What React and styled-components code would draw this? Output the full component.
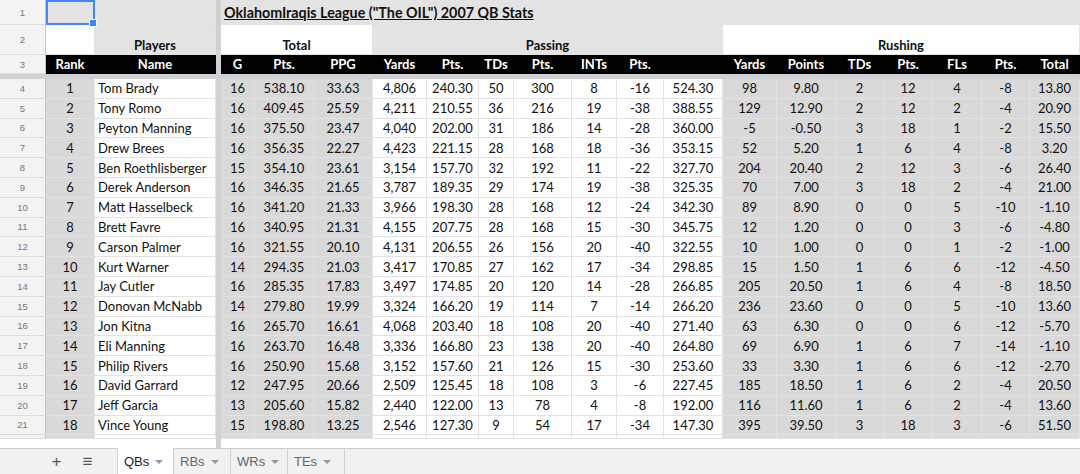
import React from 'react';
import styled, { createGlobalStyle, css } from 'styled-components';

const GlobalStyle = createGlobalStyle`
  html, body {
    margin: 0;
    padding: 0;
    background: #fff;
  }
  body {
    font-family: Lato, "Open Sans", sans-serif;
  }
`;

// column widths of the sheet, row header first, then A, B, frozen bar, C..S
const COLS = [46, 49, 121, 5, 34, 59, 59, 54, 52, 35, 58, 45, 47, 59, 54, 59, 48, 49, 49, 48, 50];

const FILLS = {
  gray: '#d9d9d9',
  light: '#e3e3e3',
  white: '#ffffff',
  black: '#000000',
};

const Page = styled.div`
  display: flex;
  flex-direction: column;
  width: 1080px;
  height: 474px;
  overflow: hidden;
`;

const Sheet = styled.div`
  flex: 1;
  display: grid;
  grid-template-columns: ${COLS.map(c => `${c}px`).join(' ')};
  grid-template-rows: 25px 30px 19px 5px repeat(18, 19.8px) 4px 1fr;
  background: #fff;
`;

const RowNum = styled.div`
  background: #f3f3f3;
  border-right: 1px solid #c4c4c4;
  border-bottom: 1px solid #dcdcdc;
  box-sizing: border-box;
  color: #777;
  font-family: "Liberation Sans", Arial, sans-serif;
  font-size: 9.5px;
  display: flex;
  align-items: center;
  justify-content: center;
`;

const Cell = styled.div`
  box-sizing: border-box;
  background: ${p => FILLS[p.$fill || 'white']};
  grid-column: span ${p => p.$span || 1};
  border-right: 1px solid ${p => (p.$fill === 'black' ? '#000' : '#e2e2e2')};
  border-bottom: 1px solid ${p => (p.$fill === 'black' ? '#000' : '#e2e2e2')};
  color: ${p => (p.$fill === 'black' ? '#fff' : '#111')};
  font-size: 13px;
  font-weight: ${p => (p.$bold ? 700 : 400)};
  white-space: nowrap;
  overflow: hidden;
  display: flex;
  align-items: ${p => (p.$bottom ? 'flex-end' : 'center')};
  justify-content: ${p => (p.$left ? 'flex-start' : 'center')};
  padding: ${p => (p.$left ? '0 3px' : '0')};
  padding-bottom: ${p => (p.$bottom ? '1px' : '0')};
  ${p => p.$selected && css`
    position: relative;
    overflow: visible;
    border: 2px solid #4285f4;
  `}
`;

const Handle = styled.span`
  position: absolute;
  right: -4px;
  bottom: -4px;
  width: 6px;
  height: 6px;
  background: #4285f4;
  border: 1px solid #fff;
`;

const Title = styled.span`
  font-weight: 700;
  text-decoration: underline;
  font-size: 14.3px;
`;

const FrozenV = styled.div`
  background: #cfd1d4;
`;

const FrozenH = styled.div`
  grid-column: 1 / -1;
  background: #cfd1d4;
`;

const Blank = styled.div`
  grid-column: span ${p => p.$span || 1};
  background: #fff;
`;

const TabBar = styled.div`
  height: 26px;
  flex: none;
  display: flex;
  align-items: stretch;
  background: #f1f1f1;
  border-top: 1px solid #cfcfcf;
  box-sizing: border-box;
  font-family: "Liberation Sans", Arial, sans-serif;
`;

const ToolGroup = styled.div`
  display: flex;
  margin-left: 41px;
`;

const ToolIcon = styled.div`
  width: 31px;
  display: flex;
  align-items: center;
  justify-content: center;
  color: #555;
  font-size: 17px;
`;

const Tabs = styled.div`
  display: flex;
  margin-left: 14px;
`;

const Tab = styled.div`
  width: 57px;
  box-sizing: border-box;
  display: flex;
  align-items: center;
  gap: 6px;
  padding-left: 6px;
  margin-top: -1px;
  border-right: 1px solid #cfcfcf;
  border-left: ${p => (p.$active ? '1px solid #cfcfcf' : 'none')};
  background: ${p => (p.$active ? '#fff' : 'transparent')};
  color: ${p => (p.$active ? '#222' : '#666')};
  font-size: 13px;
`;

const Caret = styled.span`
  width: 0;
  height: 0;
  border-left: 4px solid transparent;
  border-right: 4px solid transparent;
  border-top: 4px solid #999;
  margin-top: 2px;
`;

const HEADERS = ['Rank', 'Name', 'G', 'Pts.', 'PPG', 'Yards', 'Pts.', 'TDs', 'Pts.', 'INTs', 'Pts.', '', 'Yards', 'Points', 'TDs', 'Pts.', 'FLs', 'Pts.', 'Total'];

const DATA = [
  [1, 'Tom Brady', 16, '538.10', '33.63', '4,806', '240.30', 50, 300, 8, -16, '524.30', 98, '9.80', 2, 12, 4, -8, '13.80'],
  [2, 'Tony Romo', 16, '409.45', '25.59', '4,211', '210.55', 36, 216, 19, -38, '388.55', 129, '12.90', 2, 12, 2, -4, '20.90'],
  [3, 'Peyton Manning', 16, '375.50', '23.47', '4,040', '202.00', 31, 186, 14, -28, '360.00', -5, '-0.50', 3, 18, 1, -2, '15.50'],
  [4, 'Drew Brees', 16, '356.35', '22.27', '4,423', '221.15', 28, 168, 18, -36, '353.15', 52, '5.20', 1, 6, 4, -8, '3.20'],
  [5, 'Ben Roethlisberger', 15, '354.10', '23.61', '3,154', '157.70', 32, 192, 11, -22, '327.70', 204, '20.40', 2, 12, 3, -6, '26.40'],
  [6, 'Derek Anderson', 16, '346.35', '21.65', '3,787', '189.35', 29, 174, 19, -38, '325.35', 70, '7.00', 3, 18, 2, -4, '21.00'],
  [7, 'Matt Hasselbeck', 16, '341.20', '21.33', '3,966', '198.30', 28, 168, 12, -24, '342.30', 89, '8.90', 0, 0, 5, -10, '-1.10'],
  [8, 'Brett Favre', 16, '340.95', '21.31', '4,155', '207.75', 28, 168, 15, -30, '345.75', 12, '1.20', 0, 0, 3, -6, '-4.80'],
  [9, 'Carson Palmer', 16, '321.55', '20.10', '4,131', '206.55', 26, 156, 20, -40, '322.55', 10, '1.00', 0, 0, 1, -2, '-1.00'],
  [10, 'Kurt Warner', 14, '294.35', '21.03', '3,417', '170.85', 27, 162, 17, -34, '298.85', 15, '1.50', 1, 6, 6, -12, '-4.50'],
  [11, 'Jay Cutler', 16, '285.35', '17.83', '3,497', '174.85', 20, 120, 14, -28, '266.85', 205, '20.50', 1, 6, 4, -8, '18.50'],
  [12, 'Donovan McNabb', 14, '279.80', '19.99', '3,324', '166.20', 19, 114, 7, -14, '266.20', 236, '23.60', 0, 0, 5, -10, '13.60'],
  [13, 'Jon Kitna', 16, '265.70', '16.61', '4,068', '203.40', 18, 108, 20, -40, '271.40', 63, '6.30', 0, 0, 6, -12, '-5.70'],
  [14, 'Eli Manning', 16, '263.70', '16.48', '3,336', '166.80', 23, 138, 20, -40, '264.80', 69, '6.90', 1, 6, 7, -14, '-1.10'],
  [15, 'Philip Rivers', 16, '250.90', '15.68', '3,152', '157.60', 21, 126, 15, -30, '253.60', 33, '3.30', 1, 6, 6, -12, '-2.70'],
  [16, 'David Garrard', 12, '247.95', '20.66', '2,509', '125.45', 18, 108, 3, -6, '227.45', 185, '18.50', 1, 6, 2, -4, '20.50'],
  [17, 'Jeff Garcia', 13, '205.60', '15.82', '2,440', '122.00', 13, 78, 4, -8, '192.00', 116, '11.60', 1, 6, 2, -4, '13.60'],
  [18, 'Vince Young', 15, '198.80', '13.25', '2,546', '127.30', 9, 54, 17, -34, '147.30', 395, '39.50', 3, 18, 3, -6, '51.50'],
];

// which data columns are shaded
const fillFor = i => (i === 0 || (i >= 2 && i <= 4) || i >= 12 ? 'gray' : 'white');

function DataRow({ num, values }) {
  return (
    <>
      <RowNum>{num}</RowNum>
      {values.map((v, i) => (
        <React.Fragment key={i}>
          <Cell $fill={fillFor(i)} $left={i === 1}>{v}</Cell>
          {i === 1 && <FrozenV />}
        </React.Fragment>
      ))}
    </>
  );
}

export default function App() {
  const blanks = HEADERS.map(() => '');

  return (
    <Page>
      <GlobalStyle />
      <Sheet>
        {/* row 1: title */}
        <RowNum>1</RowNum>
        <Cell $fill="light" $selected><Handle /></Cell>
        <Cell $fill="light" />
        <FrozenV />
        <Cell $fill="light" $span={17} $left>
          <Title>OklahomIraqis League ("The OIL") 2007 QB Stats</Title>
        </Cell>

        {/* row 2: groups */}
        <RowNum>2</RowNum>
        <Cell />
        <Cell $fill="light" $bold $bottom>Players</Cell>
        <FrozenV />
        <Cell $span={3} $bold $bottom>Total</Cell>
        <Cell $fill="light" $span={7} $bold $bottom>Passing</Cell>
        <Cell $span={7} $bold $bottom>Rushing</Cell>

        {/* row 3: column names */}
        <RowNum>3</RowNum>
        {HEADERS.map((h, i) => (
          <React.Fragment key={i}>
            <Cell $fill="black" $bold>{h}</Cell>
            {i === 1 && <FrozenV />}
          </React.Fragment>
        ))}

        <FrozenH />

        {DATA.map((row, i) => (
          <DataRow key={i} num={i + 4} values={row} />
        ))}

        {/* partially visible row 22 */}
        <DataRow num="" values={blanks} />

        <Blank $span={3} />
        <FrozenV />
        <Blank $span={17} />
      </Sheet>

      <TabBar>
        <ToolGroup>
          <ToolIcon>+</ToolIcon>
          <ToolIcon>≡</ToolIcon>
        </ToolGroup>
        <Tabs>
          <Tab $active>QBs <Caret /></Tab>
          <Tab>RBs <Caret /></Tab>
          <Tab>WRs <Caret /></Tab>
          <Tab>TEs <Caret /></Tab>
        </Tabs>
      </TabBar>
    </Page>
  );
}
